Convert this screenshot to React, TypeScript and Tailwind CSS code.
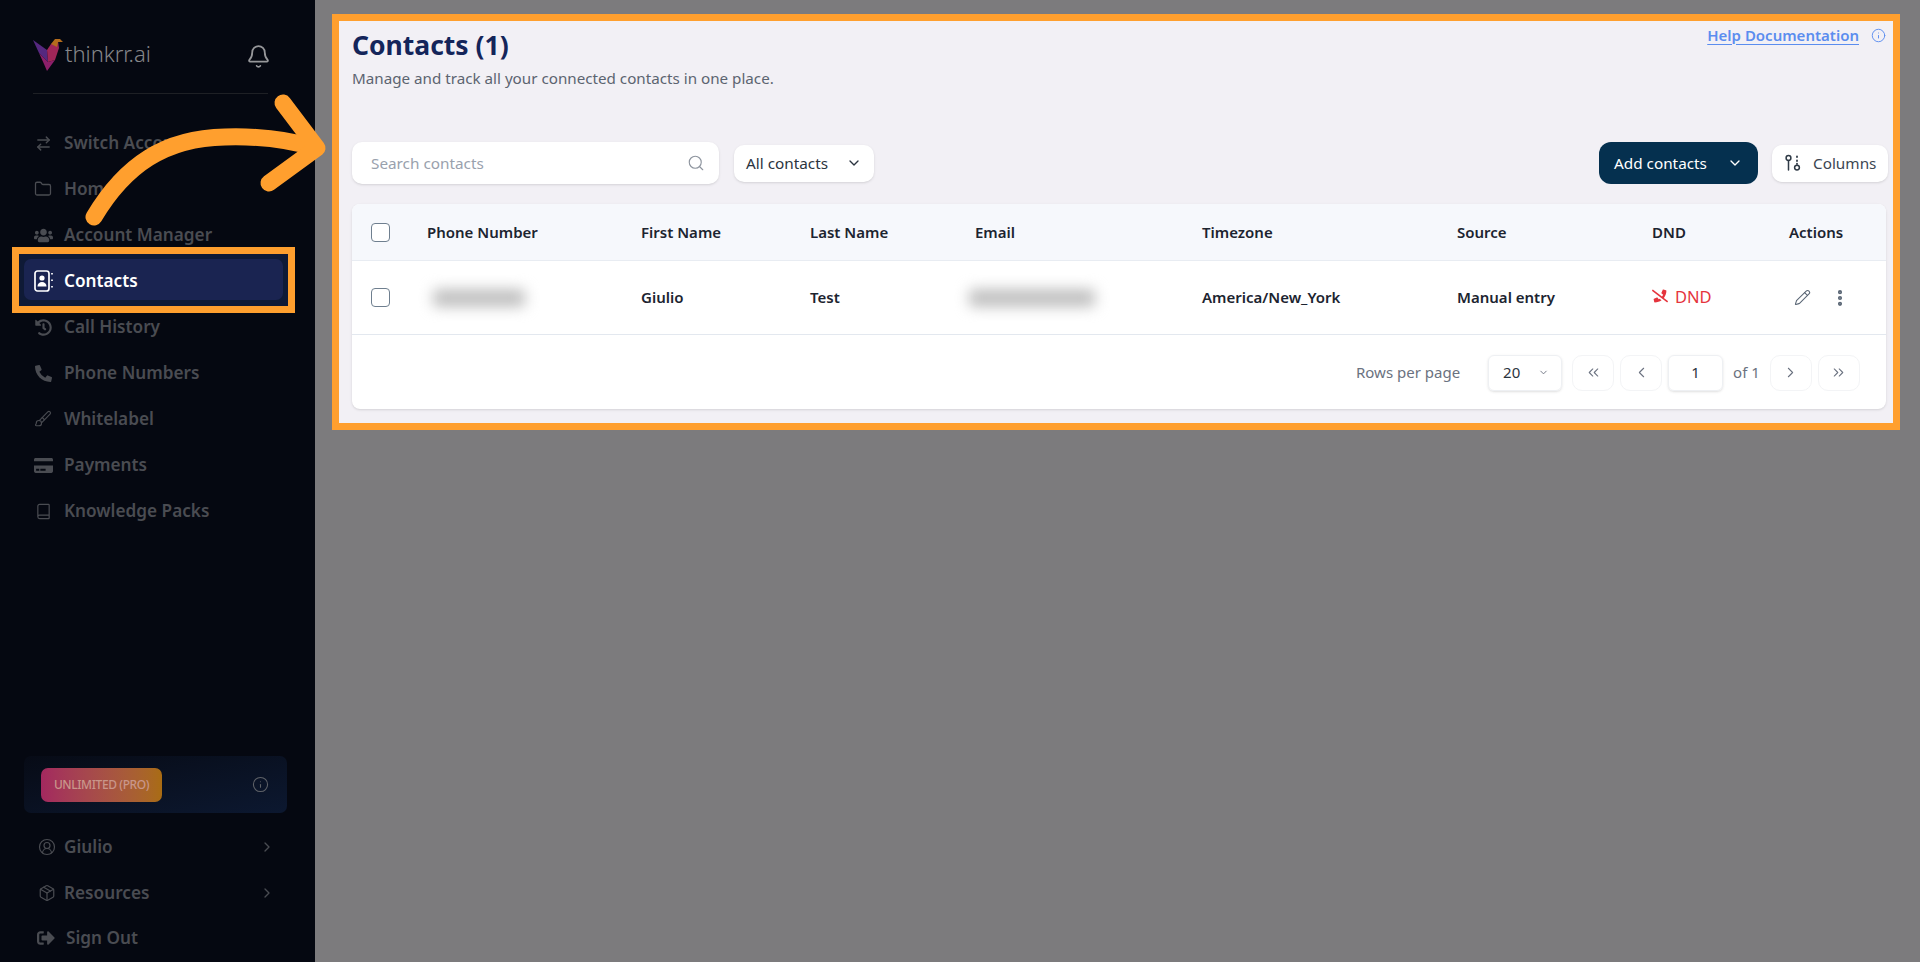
import { ArrowRightLeft, Bell, Book, Brush, ChevronDown, ChevronLeft, ChevronRight, ChevronsLeft, ChevronsRight, CircleUserRound, EllipsisVertical, Folder, Info, Package, Pencil, Search } from 'lucide-react';
import { FaCreditCard, FaHistory, FaPhoneAlt, FaPhoneSlash, FaSignOutAlt, FaUsers } from 'react-icons/fa';
import type { ReactNode } from 'react';

const tableGrid = 'grid grid-cols-[56px_214px_169px_165px_227px_255px_195px_137px_1fr] items-center pl-[19px]';

function Logo() {
  return (
    <svg width="30" height="34" viewBox="0 0 30 34" className="shrink-0">
      <polygon points="0,2 14,12 15,24 6,15" fill="#55287f" />
      <polygon points="6,15 15,24 22,22 14,33 11,26" fill="#8c1f6a" />
      <polygon points="15,24 14,12 18,6 25,3 26,10 22,22" fill="#a02658" />
      <polygon points="18,6 22,1 27,1 30,4 25,4 24,9" fill="#b46c1c" />
    </svg>
  );
}

function ContactBookIcon() {
  return (
    <svg width="19" height="22" viewBox="0 0 19 22" fill="none" stroke="currentColor" strokeWidth="1.7">
      <rect x="1" y="1" width="14" height="20" rx="2.5" />
      <circle cx="8" cy="8" r="2.6" fill="currentColor" stroke="none" />
      <path d="M3.5 16.5c0-3 2-4.5 4.5-4.5s4.5 1.5 4.5 4.5z" fill="currentColor" stroke="none" />
      <path d="M18 3v3M18 9.5v3M18 16v3" strokeDasharray="1.6 1.4" />
    </svg>
  );
}

function ColumnsIcon() {
  return (
    <svg width="18" height="18" viewBox="0 0 18 18" fill="none" stroke="#2f3a46" strokeWidth="1.5">
      <circle cx="4.5" cy="4" r="2.4" />
      <path d="M4.5 6.4V16" strokeLinecap="round" />
      <circle cx="13" cy="13.6" r="2.4" />
      <path d="M13 2.4v.6M13 6.4v.6M13 9.6v.4" strokeLinecap="round" strokeWidth="1.8" />
    </svg>
  );
}

function NavItem({ icon, label }: { icon: ReactNode; label: string }) {
  return (
    <div className="flex h-[46px] items-center text-[#4a4c52]">
      <div className="flex w-[20px] justify-center">{icon}</div>
      <span className="ml-[11px] text-[17.2px] font-semibold">{label}</span>
    </div>
  );
}

function Sidebar() {
  return (
    <aside className="flex h-[962px] w-[315px] shrink-0 flex-col bg-[#050811]">
      <div className="ml-[33px] mr-[47px] flex items-center justify-between border-b border-[#1e2025] pt-[38px] pb-[21px]">
        <div className="flex items-start">
          <Logo />
          <span className="ml-[2px] text-[22px] font-light leading-[30px] text-[#85868a]">thinkrr.ai</span>
        </div>
        <Bell size={25} strokeWidth={1.7} className="mt-[3px] mr-[-3px] text-[#96979a]" />
      </div>

      <nav className="ml-[33px] mt-[26px] flex flex-col">
        <NavItem icon={<ArrowRightLeft size={17} strokeWidth={2} />} label="Switch Account" />
        <NavItem icon={<Folder size={18} strokeWidth={1.7} />} label="Home" />
        <NavItem icon={<FaUsers size={19} />} label="Account Manager" />
        <div className="relative flex h-[46px] items-center text-white">
          {/* highlighted item with the tutorial frame on top */}
          <div className="absolute left-[-21px] top-[-11px] h-[66px] w-[283px] border-[7px] border-[#ff9f2e] bg-[#0f1a36]" />
          <div className="absolute left-[-9px] top-[1px] h-[41px] w-[259px] rounded-[7px] bg-[#1a2451]" />
          <div className="relative flex w-[20px] justify-center"><ContactBookIcon /></div>
          <span className="relative ml-[11px] text-[17.2px] font-semibold">Contacts</span>
        </div>
        <NavItem icon={<FaHistory size={17} />} label="Call History" />
        <NavItem icon={<FaPhoneAlt size={17} />} label="Phone Numbers" />
        <NavItem icon={<Brush size={18} strokeWidth={1.5} />} label="Whitelabel" />
        <NavItem icon={<FaCreditCard size={19} />} label="Payments" />
        <NavItem icon={<Book size={17} strokeWidth={1.7} />} label="Knowledge Packs" />
      </nav>

      <div className="mx-[24px] mt-auto flex h-[57px] w-[263px] items-center justify-between rounded-[7px] bg-gradient-to-br from-[#070b16] to-[#0c1830] pl-[17px] pr-[18px]">
        <div className="flex h-[34px] w-[121px] items-center justify-center rounded-[7px] bg-gradient-to-r from-[#a3285f] to-[#a96c12] text-[12px] font-medium tracking-[-0.4px] text-[#c9968a]">
          UNLIMITED (PRO)
        </div>
        <Info size={17} strokeWidth={1.5} className="text-[#5f6268]" />
      </div>

      <div className="mt-[11px] flex h-[46px] items-center pl-[38px] pr-[40px] text-[#4a4c52]">
        <CircleUserRound size={18} strokeWidth={1.6} />
        <span className="ml-[8px] text-[17.2px] font-semibold">Giulio</span>
        <ChevronRight size={16} className="ml-auto" />
      </div>
      <div className="flex h-[46px] items-center pl-[38px] pr-[40px] text-[#4a4c52]">
        <Package size={18} strokeWidth={1.6} />
        <span className="ml-[8px] text-[17.2px] font-semibold">Resources</span>
        <ChevronRight size={16} className="ml-auto" />
      </div>
      <div className="mb-[2px] flex h-[44px] items-center pl-[37px] text-[#4a4c52]">
        <FaSignOutAlt size={18} />
        <span className="ml-[11px] text-[17.2px] font-semibold">Sign Out</span>
      </div>
    </aside>
  );
}

function PageButton({ children }: { children: ReactNode }) {
  return (
    <div className="flex h-[36px] w-[42px] items-center justify-center rounded-[10px] border border-[#f3f4f6] text-[#6b7280]">
      {children}
    </div>
  );
}

function ContactsPanel() {
  return (
    <section className="ml-[17px] mr-[20px] mt-[14px] h-[416px] border-[7px] border-[#ff9f2e] bg-[#f2f0f5] pl-[13px] pr-[7px]">
      <div className="flex items-start justify-between">
        <div>
          <h1 className="mt-[6px] text-[26.5px] font-bold leading-[36px] text-[#14255a]">Contacts (1)</h1>
          <p className="mt-[3px] text-[15.2px] leading-[24px] text-[#5c6470]">Manage and track all your connected contacts in one place.</p>
        </div>
        <div className="mt-[6px] flex items-center text-[#5b8def]">
          <a className="text-[15px] font-semibold leading-[17px] underline decoration-1 underline-offset-[3px]">Help Documentation</a>
          <Info size={15} strokeWidth={1.5} className="ml-[12px]" />
        </div>
      </div>

      <div className="mt-[52px] flex items-center">
        <div className="flex h-[42px] w-[367px] items-center justify-between rounded-[10px] bg-white pl-[19px] pr-[14px] shadow-sm">
          <span className="text-[15.3px] text-[#99a1ad]">Search contacts</span>
          <Search size={18} strokeWidth={1.5} className="text-[#8d949e]" />
        </div>
        <div className="ml-[15px] flex h-[37px] w-[140px] items-center rounded-[10px] bg-white pl-[12px] shadow-sm">
          <span className="text-[15.3px] text-[#2b3440]">All contacts</span>
          <ChevronDown size={16} strokeWidth={2} className="ml-[18px] text-[#2b3440]" />
        </div>
        <div className="ml-auto flex h-[42px] w-[159px] items-center rounded-[12px] bg-[#05304f] pl-[15px] text-white">
          <span className="text-[15.3px]">Add contacts</span>
          <ChevronDown size={16} strokeWidth={2} className="ml-[20px]" />
        </div>
        <div className="ml-[14px] mr-[-2px] flex h-[37px] w-[116px] items-center rounded-[10px] bg-white pl-[12px] shadow-sm">
          <ColumnsIcon />
          <span className="ml-[11px] text-[15.3px] text-[#3c4652]">Columns</span>
        </div>
      </div>

      <div className="mt-[20px] h-[205px] overflow-hidden rounded-[8px] bg-white shadow">
        <div className={`${tableGrid} h-[57px] border-b border-[#e8ecf2] bg-[#f6f8fc] text-[15px] font-semibold text-[#1c2430]`}>
          <div className="h-[19px] w-[19px] rounded-[4px] border-[1.5px] border-[#6f7f8f] bg-white" />
          <div>Phone Number</div>
          <div>First Name</div>
          <div>Last Name</div>
          <div>Email</div>
          <div>Timezone</div>
          <div>Source</div>
          <div>DND</div>
          <div>Actions</div>
        </div>
        <div className={`${tableGrid} h-[74px] border-b border-[#e3e8ef] text-[15px] font-semibold text-[#1c2430]`}>
          <div className="h-[19px] w-[19px] rounded-[4px] border-[1.5px] border-[#6f7f8f] bg-white" />
          <div className="ml-[6px] h-[18px] w-[92px] rounded bg-[#c0c0c0] blur-[7px]" />
          <div>Giulio</div>
          <div>Test</div>
          <div className="ml-[-6px] h-[18px] w-[126px] rounded bg-[#c0c0c0] blur-[7px]" />
          <div>America/New_York</div>
          <div>Manual entry</div>
          <div className="flex items-center text-[#e5343d]">
            <FaPhoneSlash size={16} className="mt-[-4px]" />
            <span className="ml-[7px] text-[16.5px] font-normal">DND</span>
          </div>
          <div className="flex items-center text-[#5a6675]">
            <Pencil size={17} strokeWidth={1.5} className="ml-[5px]" />
            <EllipsisVertical size={20} strokeWidth={3} className="ml-[19px]" />
          </div>
        </div>
        <div className="flex h-[74px] items-center pt-[1px] pl-[1004px] text-[15px] text-[#6b7280]">
          <span className="whitespace-nowrap">Rows per page</span>
          <div className="ml-[28px] flex h-[36px] w-[74px] shrink-0 items-center rounded-[6px] border border-[#eef0f3] pl-[14px] text-[#2b3440] shadow-sm">
            <span>20</span>
            <ChevronDown size={11} className="ml-[18px] text-[#6b7280]" />
          </div>
          <div className="ml-[10px] flex shrink-0 items-center gap-[6px]">
            <PageButton><ChevronsLeft size={17} strokeWidth={1.5} /></PageButton>
            <PageButton><ChevronLeft size={17} strokeWidth={1.5} /></PageButton>
            <div className="flex h-[36px] w-[55px] items-center justify-center rounded-[6px] border border-[#eef0f3] text-[#2b3440] shadow-sm">1</div>
          </div>
          <span className="ml-[10px] mr-[10px] whitespace-nowrap">of 1</span>
          <div className="flex shrink-0 items-center gap-[6px]">
            <PageButton><ChevronRight size={17} strokeWidth={1.5} /></PageButton>
            <PageButton><ChevronsRight size={17} strokeWidth={1.5} /></PageButton>
          </div>
        </div>
      </div>
    </section>
  );
}

export default function App() {
  return (
    <div className="relative flex h-[962px] w-[1920px] overflow-hidden bg-[#7c7b7d] font-['Noto_Sans',sans-serif]">
      <Sidebar />
      <main className="min-w-0 flex-1">
        <ContactsPanel />
      </main>
      {/* tutorial arrow over the sidebar */}
      <svg className="pointer-events-none absolute left-0 top-0" width="340" height="240" viewBox="0 0 340 240" fill="none" stroke="#ff9f2e" strokeWidth="17" strokeLinecap="round" strokeLinejoin="round">
        <path d="M94 217C125 165 165 138 225 137C258 136 290 140 316 148" />
        <path d="M283 103L317 148L269 183" />
      </svg>
    </div>
  );
}
